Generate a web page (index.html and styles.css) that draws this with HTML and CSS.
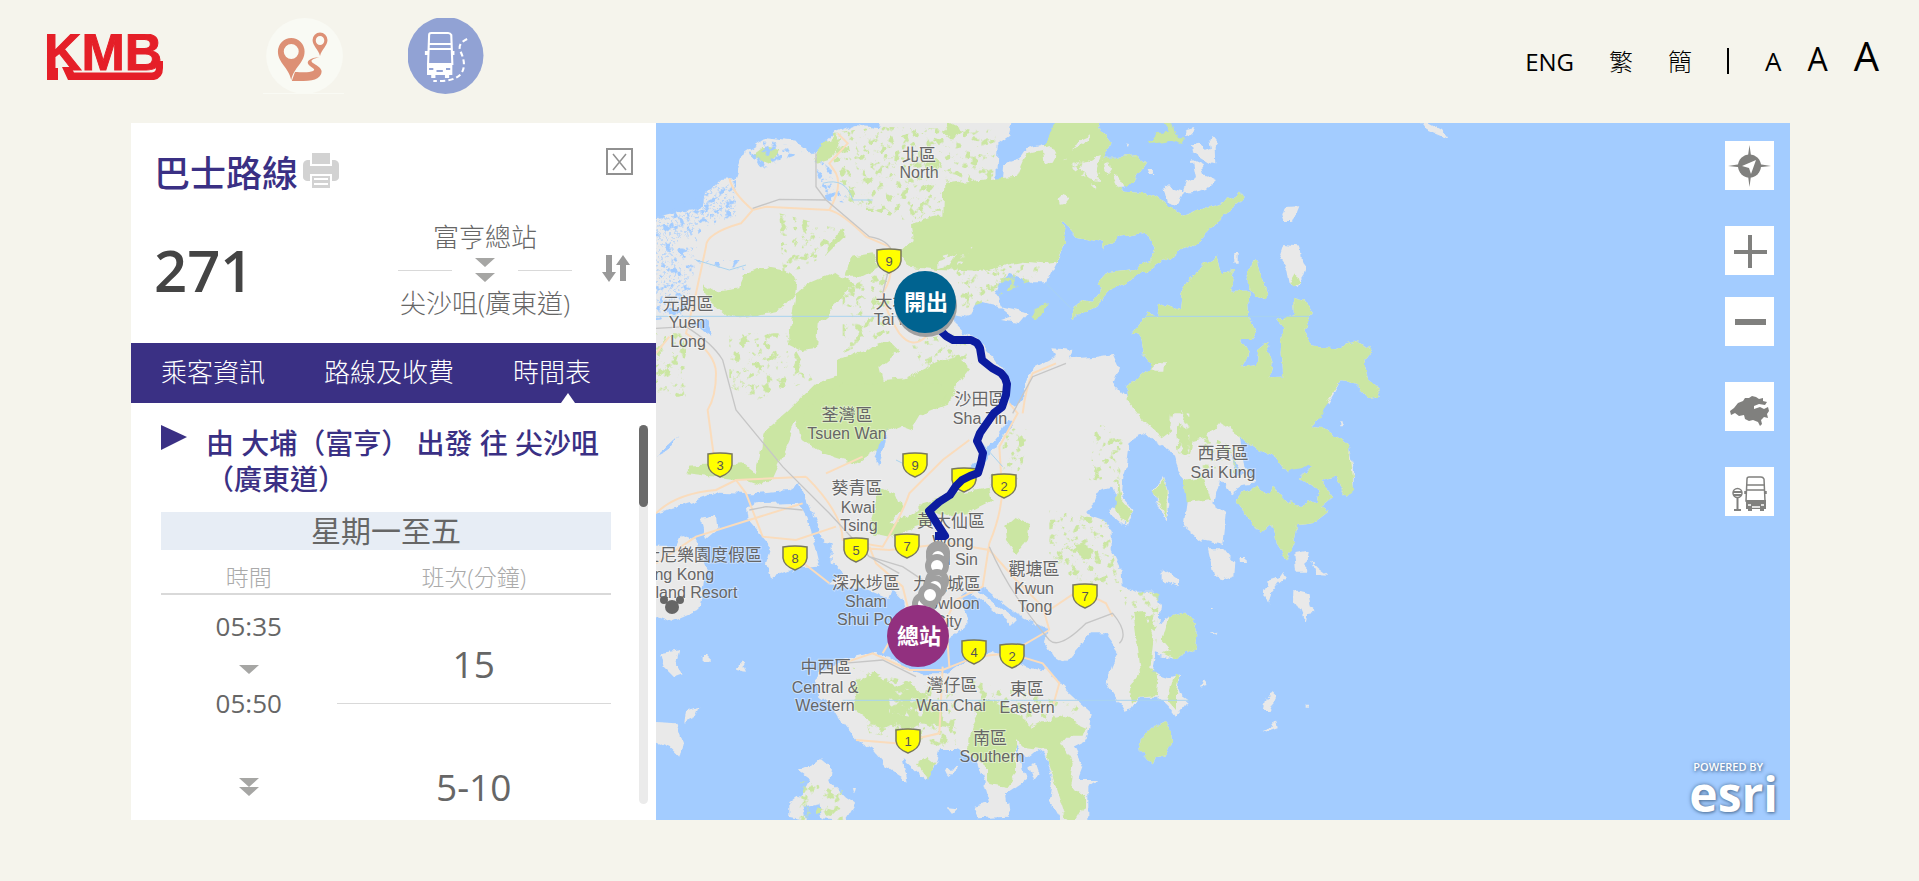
FILE: index.html
```html
<!DOCTYPE html>
<html lang="zh-Hant">
<head>
  <meta charset="UTF-8" />
  <title>KMB 巴士路線 271</title>
  <link rel="stylesheet" href="styles.css">
</head>
<body>
  <header class="header">
    <a class="logo" href="#" aria-label="KMB">
      <svg width="124" height="46" viewBox="0 0 124 46">
        <text class="logoText" x="0" y="36">KMB</text>
        <path d="M3 34H14V46H3ZM18 33L24 46H110Q119 44 119 34V27L112 27V34Q112 38 108 38.500H30L27 33Z" />
      </svg>
    </a>
    <nav class="modes">
      <a href="#" aria-label="點到點搜尋">
        <svg width="81" height="76" viewBox="0 0 76 76" preserveAspectRatio="none">
          <ellipse cx="39" cy="38" rx="36" ry="38" fill="#f9faf4" />
          <path d="M0 76H76" stroke="#f9faf4" stroke-width="2" />
          <g fill="#dd9075">
            <path fill-rule="evenodd" d="M26.500 62C24 49 14 45 14 33.500a12.500 13.500 0 0 1 25 0C39 45 29 49 26.500 62ZM26.500 26a7 7.500 0 1 0 0 15a7 7.500 0 0 0 0-15Z" />
            <path fill-rule="evenodd" d="M53.500 38C52 31 46.500 28 46.500 22a7 7.500 0 0 1 14 0C60.500 28 55 31 53.500 38ZM53.500 18a4 4.500 0 1 0 0 9a4 4.500 0 0 0 0-9Z" />
            <path d="M53 39C44 40 40 43 43 47C46 50 50 51 47 53C43 55 35 54 30 54L27 63H38C50 63 55 59 55 53C54 47 43 45 46 42C48 40 51 40 53 39Z" />
          </g>
        </svg>
      </a>
      <a href="#" aria-label="路線搜尋">
        <svg width="76" height="76" viewBox="0 0 72 76" preserveAspectRatio="none">
          <ellipse cx="35.500" cy="37.500" rx="36" ry="38.500" fill="#91a2d4" />
          <g fill="none" stroke="#fff" stroke-width="2">
            <path d="M20 17Q20 15 22 15H38Q40 15 41 17L42 46H19ZM19 26H41M19 31H41" />
            <path d="M56 21Q46 26 50 34Q56 48 50 56Q44 64 24 63" stroke-dasharray="5 3" />
          </g>
          <path fill="#fff" d="M18 45H42V57H39V60H35V57H26V60H22V57H18ZM16 33H19V37H16ZM41 33H44V37H41Z" />
          <path d="M20 51H24M36 51H40M27 53H33" stroke="#91a2d4" stroke-width="2" />
        </svg>
      </a>
    </nav>
    <nav class="options">
      <a class="eng" href="#">ENG</a>
      <a href="#">繁</a>
      <a href="#">簡</a>
      <span class="bar"></span>
      <button class="fontBtn small">A</button>
      <button class="fontBtn medium">A</button>
      <button class="fontBtn large">A</button>
    </nav>
  </header>

  <main class="main">
    <section class="panel">
      <div class="routeHead">
        <div class="titleRow">
          <h1>巴士路線</h1>
          <button class="iconBtn" aria-label="列印">
            <svg width="36" height="35" viewBox="0 0 36 35" fill="#d2d2d2">
              <path d="M9 0H27V11H9ZM4 7H7V13H29V7H32Q36 8 36 12V24Q36 27 32 28H29V21H7V28H4Q0 27 0 24V12Q0 8 4 7Z" />
              <path fill-rule="evenodd" d="M9 23H27V35H9ZM11 25V27H25V25ZM11 30V32H25V30Z" />
            </svg>
          </button>
          <button class="iconBtn close" aria-label="關閉">
            <svg width="27" height="27" viewBox="0 0 27 27" fill="none" stroke="#909090" stroke-width="2">
              <path d="M1 1H26V26H1Z" /><path d="M7 6L20 22M20 6L7 22" stroke-width="1.500" />
            </svg>
          </button>
        </div>
        <div class="routeRow">
          <strong class="routeNo">271</strong>
          <div class="stops">
            <span>富亨總站</span>
            <div class="divider">
              <i></i>
              <svg width="20" height="25" viewBox="0 0 20 25" fill="#a6a6a4"><path d="M0 0H20L10 9ZM0 15H20L10 24Z" /></svg>
              <i></i>
            </div>
            <span>尖沙咀(廣東道)</span>
          </div>
          <button class="iconBtn swap" aria-label="對調方向">
            <svg width="28" height="27" viewBox="0 0 28 27" fill="#999"><path d="M4 0H10V17H14L7 27L0 17H4ZM21 0L28 10H24V26H18V10H14Z" /></svg>
          </button>
        </div>
      </div>

      <nav class="tabs">
        <a href="#">乘客資訊</a>
        <a href="#">路線及收費</a>
        <a class="active" href="#">時間表</a>
      </nav>

      <div class="content">
        <div class="timetable">
          <div class="direction">
            <svg width="26" height="25" viewBox="0 0 26 25" fill="#3a3084"><path d="M0 0L26 12L0 25Z" /></svg>
            <h2>由 大埔（富亨） 出發 往 尖沙咀（廣東道）</h2>
          </div>
          <h3>星期一至五</h3>
          <table>
            <thead>
              <tr><th class="timeCol">時間</th><th>班次(分鐘)</th></tr>
            </thead>
            <tbody>
              <tr class="rowTime"><td>05:35</td><td class="freq line" rowspan="3">15</td></tr>
              <tr class="rowArrow"><td><svg width="20" height="9" viewBox="0 0 20 9" fill="#a6a6a4"><path d="M0 0H20L10 9Z" /></svg></td></tr>
              <tr class="rowHalf"><td rowspan="2">05:50</td></tr>
              <tr class="rowHalf"><td class="freq long" rowspan="2">5-10</td></tr>
              <tr class="rowLong"><td><svg width="20" height="18" viewBox="0 0 20 18" fill="#a6a6a4"><path d="M0 0H20L10 9ZM0 9H20L10 18Z" /></svg></td></tr>
            </tbody>
          </table>
        </div>
        <div class="track"><div class="thumb"></div></div>
      </div>
    </section>

    <section class="map">
      <svg class="mapSvg" viewBox="0 0 1134 697" preserveAspectRatio="xMinYMin slice">
        <defs>
          <!-- ragged coastline -->
          <filter id="rough" x="0" y="0" width="1" height="1">
            <feTurbulence type="fractalNoise" baseFrequency="0.09" numOctaves="3" seed="4" />
            <feDisplacementMap in="SourceGraphic" scale="8" xChannelSelector="R" yChannelSelector="G" />
          </filter>
          <!-- scattered patches -->
          <filter id="specks" x="0" y="0" width="1" height="1">
            <feTurbulence type="fractalNoise" baseFrequency="0.13" numOctaves="4" seed="9" />
            <feColorMatrix values="0 0 0 0 0  0 0 0 0 0  0 0 0 0 0  9 0 0 0 -5" />
            <feComposite in="SourceGraphic" operator="in" />
          </filter>
          <path id="shield" d="M-12 -11Q0 -13 12 -11L12 0Q11 8 0 12Q-11 8 -12 0Z" />
        </defs>
        <rect width="1134" height="697" fill="#a3ccff" />

        <g filter="url(#rough)">
          <g transform="translate(0 -3) scale(.33333)">
            <g class="land">
              <path d="M-20 300L90 270 140 265 150 220 190 180 235 178 262 100 330 55 420 65 465 100 480 95 540 35 600 12 670 22 675-20 1075-20 1060 50 1025 75 1020 195 1040 190 1045 130 1090 115 1110 85 1150 75 1195 75 1212-20 1317-20 1337 30 1367 70 1342 110 1402 110 1442 105 1472 130 1427 195 1382 195 1407 215 1472 220 1522 245 1582 290 1652 260 1707 245 1752 215 1772 230 1702 285 1632 360 1607 378 1522 420 1442 470 1362 510 1317 560 1249 595 1249 565 1282 540 1307 545 1340 505 1322 495 1352 460 1432 450 1482 420 1497 385 1467 338 1392 350 1342 385 1342 368 1262 350 1227 310 1217 300 1227 370 1202 430 1172 490 1130 490 1060 458 1030 490 1020 520 1040 570 1065 590 1035 600 1090 610 1115 580 1000 555 965 545 940 590 895 583 900 620 920 640 960 650 1000 700 1060 770 1060 850 1080 865 1100 840 1115 780 1135 740 1200 705 1192 685 1252 690 1242 715 1322 710 1372 702 1389 740 1370 790 1412 835 1412 800 1482 750 1482 730 1460 700 1452 650 1427 640 1477 575 1507 600 1512 545 1572 570 1577 520 1602 470 1652 430 1682 410 1697 460 1737 450 1722 515 1777 515 1782 590 1802 630 1787 660 1757 660 1777 700 1760 740 1802 735 1807 690 1832 670 1847 730 1837 772 1882 770 1877 700 1882 620 1864 600 1917 585 1914 535 1952 545 1967 575 1949 625 1967 680 2037 685 2097 665 2152 688 2122 730 2132 770 2162 795 2174 830 2137 838 2102 795 2057 780 2017 850 1997 850 1992 895 1967 920 2002 925 2082 980 2094 1050 2092 1110 2072 1130 2037 1070 1997 1080 2032 1130 1997 1160 2017 1175 1972 1210 1927 1215 1917 1265 1892 1318 1862 1270 1852 1210 1812 1245 1782 1205 1742 1145 1752 1115 1802 1100 1842 1125 1852 1100 1892 1145 1932 1155 1982 1140 1992 1110 1932 1075 1972 1035 1932 1040 1892 1055 1862 1015 1802 985 1752 950 1765 1040 1800 1090 1760 1095 1722 1120 1692 1080 1672 1150 1712 1180 1702 1275 1632 1260 1582 1220 1592 1150 1582 1080 1562 1035 1552 1000 1492 960 1472 940 1422 960 1412 1040 1402 1070 1397 1130 1432 1170 1412 1220 1357 1175 1390 1150 1367 1100 1332 1110 1317 1150 1287 1180 1342 1200 1367 1230 1367 1290 1392 1340 1397 1395 1442 1415 1497 1415 1512 1460 1507 1510 1537 1490 1582 1475 1622 1520 1617 1585 1562 1620 1497 1600 1487 1660 1537 1675 1572 1665 1567 1720 1597 1740 1557 1788 1537 1760 1502 1730 1452 1730 1427 1770 1407 1775 1352 1690 1367 1640 1387 1595 1347 1540 1302 1540 1227 1630 1192 1610 1167 1570 1175 1530 1080 1480 980 1400 960 1405 1080 1500 1065 1515 940 1410 915 1430 935 1510 900 1540 860 1560 780 1560 755 1500 740 1440 710 1410 700 1435 640 1410 515 1395 560 1360 530 1330 530 1270 500 1265 465 1170 430 1090 400 1110 290 1120 190 1115 100 1150 -20 1185Z" />
              <!-- Tsing Yi, Lantau, Ma Wan -->
              <path d="M270 1170L300 1150 430 1145 455 1190 490 1340 430 1345 345 1375 330 1330 345 1280 275 1200ZM-20 1280L60 1280 75 1245 115 1260 130 1290 150 1340 130 1470 50 1505-20 1480ZM135 1200L180 1190 185 1230 150 1260Z" />
              <!-- Hong Kong Island -->
              <path d="M490 1660L560 1620 640 1600 700 1610 740 1640 800 1660 870 1660 930 1620 1010 1595 1060 1620 1110 1640 1150 1650 1172 1640 1202 1680 1242 1720 1307 1780 1292 1860 1252 1880 1282 1940 1267 1980 1327 1980 1297 2000 1297 2120 1227 2120 1182 2040 1192 1980 1172 1910 1145 1890 1110 1920 1075 1870 1110 1980 1050 2020 1060 2090 965 2095 950 2060 1000 2050 980 1980 960 1920 930 1900 900 1890 850 1890 840 1930 810 1980 775 1950 740 1920 755 1985 700 1950 650 1890 600 1860 560 1810 530 1760 490 1730 480 1680Z" />
              <!-- Lamma and the western islands -->
              <path d="M495 1915L525 1940 520 1980 570 2030 600 2050 570 2100 500 2095 490 2050 440 2060 450 2100 400 2090 400 2050 440 2020 460 1980 425 1955 470 1935ZM10 1600L70 1590 60 1630 80 1660 50 1670 20 1640ZM255 1620L270 1655 240 1650ZM90 1770L130 1760 120 1790 85 1805ZM-10 1805L60 1810 80 1870 70 1910 40 1880-10 1860ZM140 1608h18v12h-18ZM590 2005l10-2-5 20ZM875 2065l28 3-15 14ZM870 1945l40-5-30 25ZM1120 1940l20-10 10 30-15 20Z" />
              <!-- eastern islands -->
              <path d="M1588 30l24-6-8 22-16 2ZM1605 70l25-5 20 30 15-5-5-30 10-12 16 20-10 20 2 45-20-5-50-30ZM1610 120l30 15 10 30 30 12-30 30-40 10-30 0 10-30 30-15ZM1525 200l60 15-20 40-30-10ZM1887 258l40-2-20 50-20 0-8-22ZM1885 375l45 5 5 40 15 20-10 30-20 30-22-10-8-40-20-28ZM1775 470l24-50 18 50 20 50-10 14-50-22ZM1735 405h10v20h-10ZM2285-10l70 40 20 25-60-25ZM1475 150l15 0 5 12-15 0ZM1410 67l12 2-4 12ZM1475 315l20-8-3 30-12 20Z" />
              <path d="M1490 1110L1524 1065 1534 1110 1540 1150 1532 1205 1500 1140ZM1655 1285L1700 1285 1738 1330 1735 1365 1700 1378 1675 1370ZM1520 1345L1570 1380 1568 1402 1520 1380ZM1750 1308l15 0 2 15-15 0ZM1915 1300l40-8-5 60-30 0ZM1965 1325l20 20 30 22-35-2ZM1835 1385l35-10 15-22 8 15-22 20-25 30-10 30-12-30ZM1915 1410l40 10 6 45 15 10-25 5-5 20-12-30-20-30ZM1640 1680l12 15-20 5ZM1850 1720l8 8-20 45-14 0 10-45ZM1860 1795l5 30-30 10-15-5 30-10ZM1455 1855L1490 1820 1530 1800 1545 1830 1548 1870 1532 1905 1500 1912 1490 1930 1450 1890ZM2050 910h10v12h-10ZM1660 1538l22-6 4 8ZM1665 1465h8v5h-8ZM1955 1757h10v6h-10Z" />
            </g>

            <g class="park">
              <path d="M865 190L1080 170 1110 100 1160 90 1212-20 1317-20 1337 30 1367 70 1342 110 1402 110 1442 105 1472 130 1427 195 1382 195 1407 215 1472 220 1522 245 1582 290 1652 260 1707 245 1752 215 1772 230 1702 285 1632 360 1607 378 1522 420 1442 470 1362 510 1317 560 1249 595 1249 565 1282 540 1307 545 1340 505 1322 495 1352 460 1432 450 1482 420 1497 385 1467 338 1392 350 1342 385 1342 368 1262 350 1227 310 1217 300 1227 370 1202 425 1160 430 1100 425 960 455 850 450 760 440 730 400 770 360 765 310 830 290 862 290Z" />
              <path d="M1412 840L1412 800 1482 750 1482 730 1460 700 1452 650 1427 640 1477 575 1507 600 1512 545 1572 570 1577 520 1602 470 1652 430 1682 410 1697 460 1737 450 1722 515 1777 515 1782 590 1802 630 1787 660 1757 660 1777 700 1760 740 1802 735 1807 690 1832 670 1847 730 1837 772 1882 770 1877 700 1882 620 1864 600 1917 585 1914 535 1952 545 1967 575 1949 625 1967 680 2037 685 2097 665 2152 688 2122 730 2132 770 2162 795 2174 830 2137 838 2102 795 2057 780 2017 840 1992 895 1967 920 2002 925 2082 980 2094 1110 2072 1130 2037 1070 1997 1080 2032 1130 1997 1160 2017 1175 1972 1210 1927 1215 1917 1265 1892 1318 1862 1270 1852 1210 1812 1245 1782 1205 1742 1145 1752 1115 1802 1100 1842 1125 1852 1100 1892 1145 1932 1155 1982 1140 1992 1110 1932 1075 1972 1035 1892 1055 1862 1015 1802 985 1752 950 1690 905 1650 950 1610 960 1600 1010 1570 1000 1560 940 1575 880 1555 880 1540 940 1520 955 1460 900Z" />
              <path d="M140 490L180 515 250 505 260 460 320 443 390 455 425 480 420 520 375 570 300 585 250 592 210 585 160 540ZM400 640L420 520 460 490 540 455 590 490 520 580 485 610 480 690 440 695 400 675ZM572 470L585 410 650 400 670 440 610 470Z" />
              <path d="M300 1060L320 940 390 880 480 790 540 770 540 720 600 700 700 660 730 690 670 740 680 780 750 775 840 730 900 715 945 745 900 800 880 850 800 880 770 930 690 900 680 980 600 1030 500 1000 440 960 420 900 400 960 350 1070 320 1100 260 1080 90 1060 100 1040 260 1030Z" />
              <path d="M540 800L700 780 850 790 870 830 780 900 700 930 640 990 560 1000 430 940 450 860ZM470 120l25-50 60-10-25 50-50 15ZM280 110l40-30 50 10-20 40ZM515 370l50-40 0 20-50 50ZM860 40l20-30 40 20-30 20ZM630 260l30 0-5 10-25 0ZM1475 70l25-30 45-5-25-35 25 10 25 45 20 0-5 20-45-15ZM1125 590l20-35 28-8-12 30-22 20Z" />
              <path d="M640 1200L670 1100 720 1120 740 1170 700 1210 760 1190 800 1150 900 1120 1000 1100 1010 1140 930 1180 880 1190 840 1180 800 1220 700 1250 650 1240ZM1045 1220L1080 1190 1120 1210 1110 1260 1080 1300 1050 1260ZM1257 1275l30-5 25 20-5 30-30-5ZM1432 1480L1465 1475 1490 1560 1480 1640 1507 1680 1502 1725 1450 1730 1428 1755 1422 1700 1455 1660 1445 1580ZM1537 1490L1582 1475 1622 1520 1617 1585 1562 1620 1520 1600 1545 1590 1520 1560Z" />
              <path d="M590 1700L650 1660 720 1700 760 1680 850 1770 860 1800 900 1820 790 1810 760 1830 720 1810 680 1830 640 1800 600 1770ZM980 1730L1050 1760 1130 1820 1170 1800 1220 1790 1290 1820 1280 1850 1230 1850 1215 1870 1250 1930 1240 2000 1290 2030 1290 2060 1240 2090 1225 2070 1195 1980 1170 1890 1100 1880 1080 1860 1080 1960 1050 2000 990 1990 990 1940 940 1900 940 1850 960 1800ZM780 1930L810 1910 835 1930 820 1980ZM1220 2090L1250 2020 1290 2040 1250 2110ZM1455 1855L1490 1820 1530 1800 1545 1830 1548 1870 1532 1905 1500 1912 1490 1930 1450 1890ZM1490 1115L1524 1070 1532 1110 1532 1195ZM1590 1150L1582 1080 1640 1070 1665 1140 1630 1145ZM1385 1075l0 0 8 60 35 40-20 40-30-50ZM1535 1740l20-75 15 5-10 60 0 40ZM1775 470l24-50 18 50 20 50-10 14-50-22ZM1900 490l20-35 10 30-20 14Z" />
            </g>
            <!-- villages inside the parks -->
            <path class="land" d="M1248 95L1270 60 1305 45 1285 70ZM1270 150L1320 110 1335 105 1320 150 1330 180 1300 175ZM1345 150l15-30 5 30-10 15ZM1370 170l20 0 10 30-15 0ZM1208 240l15-12 18 6-15 18-15 2ZM1160 80L1190 75 1204 100 1190 125 1165 130ZM1480 750L1500 730 1527 730 1525 755 1495 755ZM1565 900l15-30 5 10-12 50ZM850 420l50-15-20 30-30 10Z" />

            <g class="water">
              <path d="M655 1030L670 970 695 930 685 980 670 1040ZM940 1050L1060 900 1075 905 960 1055ZM0 1010L70 945 40 990ZM150 600l20 50-60-40ZM1770 990l30 10 20 40-30-20ZM1720 1000l0 0 40 60-15 5Z" />
            </g>
          </g>
        </g>

        <!-- loose woods, fish ponds and clearings -->
        <g filter="url(#specks)">
          <g transform="translate(0 -3) scale(.33333)">
            <path fill="#cbe6a3" d="M520 40L670 20 1020 30 1010 190 870 200 850 290 740 300 560 240 530 130ZM370 280L560 330 500 430 380 460ZM220 640L390 640 470 780 300 840 220 800ZM560 480L700 460 700 640 560 700ZM0 640L90 640 90 830 0 830ZM900 450L1160 430 1130 480 1000 540 920 570ZM760 660L920 640 950 740 800 740ZM1040 910L1120 930 1090 1080 1040 1060ZM1320 900L1400 960 1400 1090 1300 1080ZM1180 1170L1350 1200 1390 1390 1300 1400 1180 1330ZM1390 1410L1510 1420 1500 1580 1450 1560ZM580 1640L900 1720 900 1890 640 1840ZM940 1680L1280 1760 1160 1850 960 1820ZM430 1980L560 2010 560 2100 430 2100ZM1010 1060L1060 1110 900 1180ZM1640 940L1750 990 1740 1060 1640 1050Z" />
            <path fill="#e9e9e9" d="M1150 70L1240 120 1340 120 1320 210 1280 170ZM1540 880L1600 880 1600 1010 1540 1000ZM850 410L950 380 900 460ZM700 1690L850 1740 820 1800 700 1780Z" />
            <path fill="#a3ccff" d="M0 290L240 180 240 290 130 340 120 420 90 590 0 600ZM270 90L330 60 460 90 380 120 320 150ZM470 100L500 240 580 250 540 160ZM120 420L270 420 270 450 140 440Z" />
          </g>
        </g>
        <g transform="translate(0 -3) scale(.33333)" fill="none">
          <path fill="#a3ccff" opacity=".6" d="M0 300L90 270 150 200 235 190 240 290 150 300 80 350 50 380 100 480 90 560 0 560Z" filter="url(#specks)" />
          <g class="road">
            <path d="M220 175Q230 220 290 270L330 260 520 270Q560 280 630 350L700 380Q720 460 680 520Q690 580 730 640Q770 690 810 650M290 270L255 310Q150 340 150 380L120 520 90 640Q180 700 180 760Q180 830 155 870L175 1020M520 270Q560 200 540 160L520 130 575 70 545 40M0 700L40 650" />
            <path d="M0 1180Q60 1120 180 1110L240 1080 450 1070M240 1080L270 1120 320 1250 420 1260 540 1220M0 1330L120 1250 440 1150M380 1280L520 1390M450 1070Q560 1180 560 1260L680 1280Q740 1180 760 1120L860 1020 940 960M640 1280L660 1330 740 1400 760 1480M560 1280L700 1290 880 1270 1000 1290 1080 1380 1160 1460 1180 1530M1035 1060Q1050 1150 1000 1270L980 1400 900 1440 870 1500 880 1640M1060 850L1085 880 1030 980 1035 1060M1100 880Q1110 800 1130 760L1200 730M560 1630L650 1600 760 1650 860 1650 960 1610 1060 1600 1160 1630 1210 1690 1190 1760M600 1860L720 1870 850 1840 860 1640M1060 1600L1180 1530M1180 1470L1270 1410 1350 1450 1370 1490M680 1600L740 1500M510 1060L620 1010" />
          </g>
          <g class="rail">
            <path d="M290 265L370 238 510 240 640 350Q700 360 710 400L680 520M480 100L480 200 510 240M0 625L90 620Q170 670 200 720L240 870 380 1040 520 1180 640 1310 730 1360M1070 880L1130 770 1230 730M280 1170L330 1160 440 1170M640 1310L740 1340 830 1400M1000 1280Q1060 1420 1180 1560Q1210 1590 1290 1510L1370 1480Q1420 1540 1390 1570M560 1630L680 1620 780 1670" />
          </g>
          <g class="stream">
            <path d="M500 190Q570 170 590 240L650 240M720 1020L780 1050M120 420L220 450 270 435M1170 490L1250 570M960 950L1040 1040M0 589H900M1460 589H1960M560 1741H1600" />
          </g>
        </g>

        <g class="labels zh">
          <text x="263" y="38">北區</text>
          <text x="32" y="187">元朗區</text>
          <text x="245" y="185">大埔區</text>
          <text x="191" y="298">荃灣區</text>
          <text x="324" y="282">沙田區</text>
          <text x="567" y="336">西貢區</text>
          <text x="201" y="371">葵青區</text>
          <text x="295" y="404">黃大仙區</text>
          <text x="38" y="438">迪士尼樂園度假區</text>
          <text x="210" y="466">深水埗區</text>
          <text x="291" y="467">九龍城區</text>
          <text x="378" y="452">觀塘區</text>
          <text x="170" y="550">中西區</text>
          <text x="296" y="568">灣仔區</text>
          <text x="371" y="572">東區</text>
          <text x="334" y="621">南區</text>
        </g>
        <g class="labels">
          <text x="263" y="55">North</text>
          <text x="31" y="205">Yuen</text><text x="32" y="224">Long</text>
          <text x="240" y="202">Tai Po</text>
          <text x="191" y="316">Tsuen Wan</text>
          <text x="324" y="301">Sha Tin</text>
          <text x="567" y="355">Sai Kung</text>
          <text x="202" y="390">Kwai</text><text x="203" y="408">Tsing</text>
          <text x="297" y="424">Wong</text><text x="298" y="442">Tai Sin</text>
          <text x="18" y="457">Hong Kong</text><text x="16" y="475">Disneyland Resort</text>
          <text x="210" y="484">Sham</text><text x="209" y="502">Shui Po</text>
          <text x="293" y="486">Kowloon</text><text x="292" y="504">City</text>
          <text x="378" y="471">Kwun</text><text x="379" y="489">Tong</text>
          <text x="169" y="570">Central &amp;</text><text x="169" y="588">Western</text>
          <text x="295" y="588">Wan Chai</text>
          <text x="371" y="590">Eastern</text>
          <text x="336" y="639">Southern</text>
        </g>
        <g fill="#666"><circle cx="16" cy="484" r="7" /><circle cx="8" cy="477" r="4" /><circle cx="24" cy="477" r="4" /></g>

        <g class="shields">
          <g transform="translate(233 138)"><use href="#shield" /><text y="5">9</text></g>
          <g transform="translate(64 342)"><use href="#shield" /><text y="5">3</text></g>
          <g transform="translate(259 342)"><use href="#shield" /><text y="5">9</text></g>
          <g transform="translate(308 357)"><use href="#shield" /></g>
          <g transform="translate(348 363)"><use href="#shield" /><text y="5">2</text></g>
          <g transform="translate(200 427)"><use href="#shield" /><text y="5">5</text></g>
          <g transform="translate(251 423)"><use href="#shield" /><text y="5">7</text></g>
          <g transform="translate(139 435)"><use href="#shield" /><text y="5">8</text></g>
          <g transform="translate(429 473)"><use href="#shield" /><text y="5">7</text></g>
          <g transform="translate(318 529)"><use href="#shield" /><text y="5">4</text></g>
          <g transform="translate(356 533)"><use href="#shield" /><text y="5">2</text></g>
          <g transform="translate(252 618)"><use href="#shield" /><text y="5">1</text></g>
        </g>

        <!-- route and stops -->
        <path class="route" d="M284 207L290 213 297 217H315L321 220 324 225 326 237 336 245 345 250 349 255 351 261 350 272 346 284 338 290 331 300 324 310 321 318 327 330 325 340 322 350 314 353 306 357 300 363 294 372 283 379 273 388 280 399 289 413H279" />
        <g class="stopRings">
          <circle cx="282" cy="430" r="9" /><circle cx="282" cy="434" r="9" /><circle cx="281" cy="443" r="9" />
          <circle cx="281" cy="458" r="9" /><circle cx="279" cy="464" r="9" /><circle cx="268" cy="481" r="9" /><circle cx="274" cy="472" r="9" />
        </g>
        <circle cx="270" cy="183" r="31" fill="#a0a0a0" />
        <g class="ends">
          <circle cx="269" cy="179" r="31" fill="#006390" /><text x="270" y="187">開出</text>
          <circle cx="262" cy="513" r="31" fill="#92307f" /><text x="263" y="521">總站</text>
        </g>
      </svg>

      <div class="mapTools">
        <button aria-label="我的位置">
          <svg width="49" height="49" viewBox="0 0 49 49" fill="#80807e">
            <path d="M24.500 4L27 22 46 25 27 27 24.500 46 22 27 3 25 22 22Z" /><circle cx="24.500" cy="25" r="11.500" />
            <path fill="#fff" d="M31 19L26 33 24 27 17 25Z" />
          </svg>
        </button>
        <div class="zoomBtns">
          <button aria-label="放大"><svg width="49" height="49" viewBox="0 0 49 49" stroke="#80807e" stroke-width="4"><path d="M9 26H42M25 9V42" /></svg></button>
          <button aria-label="縮小"><svg width="49" height="49" viewBox="0 0 49 49" stroke="#80807e" stroke-width="6"><path d="M10 25H41" /></svg></button>
        </div>
        <button aria-label="全港">
          <svg width="49" height="49" viewBox="0 0 49 49" fill="#80807e">
            <path d="M5 29L9 26 13 21 18 19 20 16 24 16 27 14 31 15 34 17 38 16 38 19 42 20 40 23 34 22 29 24 29 27 35 25 39 27 43 25 44 29 42 32 43 36 39 35 36 38 37 42 35 44 33 40 28 38 24 39 20 37 19 33 14 34 10 31 6 33Z" />
          </svg>
        </button>
        <button aria-label="巴士站">
          <svg width="49" height="49" viewBox="0 0 49 49" fill="none" stroke="#80807e" stroke-width="1.500">
            <path d="M22 12Q22 10 24 10H36Q38 10 39 12L40 34H21ZM22 18H39M22 23H39M20 24V27M41 24V27" />
            <circle cx="12.500" cy="26" r="4.500" /><path d="M8 25H17M8 28H17M12.500 31V42M9 43H16" stroke-width="2" />
            <path fill="#80807e" stroke="none" d="M21 33H41V42H39V44H35V42H27V44H23V42H21Z" />
            <path stroke="#fff" d="M23 38H26M36 38H39M27 40H35" />
          </svg>
        </button>
      </div>

      <a class="esri" href="#"><span>POWERED BY</span><b>esri</b></a>
    </section>
  </main>
</body>
</html>
```
FILE: styles.css
```css
* {
  box-sizing: border-box;
}
body {
  margin: 0;
  background-color: #f5f4ec;
  font-family: "Open Sans", "Noto Sans CJK TC", sans-serif;
  color: #666;
}
a {
  color: inherit;
  text-decoration: none;
}
button {
  padding: 0;
  border: 0;
  background: none;
  font-family: inherit;
  cursor: pointer;
}
svg {
  display: block;
  flex: none;
}
h1, h2, h3 {
  margin: 0;
}

/* header */
.header {
  display: flex;
  align-items: flex-start;
  height: 123px;
  padding: 18px 40px 0 44px;
}
.logo {
  margin-top: 16px;
  fill: #e51f28;
}
.logoText {
  font: bold 52px "Liberation Sans", Arial, sans-serif;
  stroke: #e51f28;
  stroke-width: 1px;
}
.modes {
  display: flex;
  gap: 64px;
  margin-left: 95px;
}
.options {
  display: flex;
  align-items: baseline;
  margin: 10px 0 0 auto;
  color: #000;
  font-size: 24px;
  font-weight: 300;
}
.options .eng {
  font-weight: 400;
}
.options a {
  margin-right: 35px;
}
.bar {
  align-self: center;
  width: 2px;
  height: 26px;
  margin-top: 11px;
  background: #000;
}
.fontBtn {
  margin-left: 26px;
  color: #000;
}
.small {
  margin-left: 36px;
  font-size: 26px;
}
.medium {
  font-size: 32px;
}
.large {
  font-size: 40px;
}

/* panel */
.main {
  display: flex;
  height: calc(100vh - 184px);
  min-height: 600px;
  margin: 0 129px 0 131px;
}
.panel {
  display: flex;
  flex-direction: column;
  flex: 0 0 525px;
  background: #fff;
}
.routeHead {
  height: 220px;
  padding: 25px 23px 0 23px;
}
.titleRow {
  display: flex;
  align-items: flex-start;
}
h1 {
  margin-right: 5px;
  color: #3a3084;
  font-size: 36px;
  font-weight: 500;
  line-height: 52px;
}
.titleRow .iconBtn {
  margin-top: 5px;
}
.titleRow .close {
  margin: 0 0 0 auto;
}
.routeRow {
  display: flex;
  align-items: center;
  margin-top: 20px;
}
.routeNo {
  color: #444;
  font-size: 58px;
  font-weight: 600;
  line-height: 60px;
}
.stops {
  width: 174px;
  margin-left: auto;
  color: #666;
  font-size: 26px;
  font-weight: 300;
  line-height: 34px;
  text-align: center;
  white-space: nowrap;
}
.divider {
  display: flex;
  align-items: center;
  justify-content: space-between;
  height: 32px;
}
.divider i {
  width: 54px;
  height: 1px;
  background: #d9d9d9;
}
.swap {
  margin: 0 3px 4px 30px;
}
.tabs {
  display: flex;
  flex: 0 0 60px;
  gap: 59px;
  padding-left: 30px;
  background: #3a3084;
  color: #fff;
  font-size: 26px;
  font-weight: 300;
  line-height: 58px;
}
.tabs .active {
  position: relative;
}
.active::after {
  content: "";
  position: absolute;
  right: 16px;
  bottom: 0;
  border: 7px solid transparent;
  border-top-width: 0;
  border-bottom: 10px solid #fff;
}

/* timetable */
.content {
  display: flex;
  flex: 1;
  min-height: 0;
  padding: 22px 8px 0 30px;
}
.timetable {
  flex: 1;
  margin-right: 28px;
  overflow: hidden;
}
.direction {
  display: flex;
  align-items: flex-start;
}
h2 {
  margin-left: 19px;
  color: #3a3084;
  font-size: 28px;
  font-weight: 500;
  line-height: 36px;
}
h3 {
  margin-top: 15px;
  background: #e7edf5;
  color: #666;
  font-size: 30px;
  font-weight: 400;
  line-height: 38px;
  text-align: center;
}
table {
  width: 100%;
  border-collapse: collapse;
  table-layout: fixed;
  text-align: center;
}
th {
  height: 44px;
  padding: 11px 0 0;
  border-bottom: 2px solid #d9d9d9;
  color: #aaa;
  font-size: 23px;
  font-weight: 300;
  line-height: 30px;
}
td {
  padding: 0;
  font-size: 26px;
  line-height: 40px;
}
td svg {
  margin: 0 auto;
}
.timeCol {
  width: 39%;
}
.freq {
  padding-top: 30px;
  font-size: 37px;
}
.long {
  padding-top: 20px;
}
.line {
  border-bottom: 1px solid #d9d9d9;
}
.rowTime {
  height: 62px;
}
.rowArrow {
  height: 26px;
}
.rowHalf {
  height: 21px;
}
.rowLong {
  height: 126px;
}
.track {
  width: 9px;
  margin-bottom: 16px;
  border-radius: 5px;
  background: #ebebeb;
}
.thumb {
  height: 82px;
  border-radius: 5px;
  background: #6a6a6a;
}

/* map */
.map {
  position: relative;
  flex: 1;
  overflow: hidden;
  background: #a3ccff;
}
.mapSvg {
  width: 100%;
  height: 100%;
}
.land {
  fill: #e9e9e9;
}
.park {
  fill: #cbe6a3;
}
.water {
  fill: #a3ccff;
}
.road {
  stroke: #fadcbc;
  stroke-width: 6;
}
.rail {
  stroke: #c6c6c6;
  stroke-width: 4;
}
.stream {
  stroke: #a9d3ef;
  stroke-width: 3;
}
.labels {
  fill: #666;
  stroke: rgba(255, 255, 255, 0.4);
  stroke-width: 2px;
  paint-order: stroke;
  font-family: "Liberation Sans", "Noto Sans CJK TC", sans-serif;
  font-size: 16px;
  text-anchor: middle;
}
.zh {
  font-size: 17px;
}
.shields {
  fill: #ff0;
  stroke: #77775c;
  stroke-width: 1.5px;
}
.shields text {
  fill: #555;
  stroke: none;
  font: 13px "Liberation Sans", Arial, sans-serif;
  text-anchor: middle;
}
.route {
  fill: none;
  stroke: #0c1c9f;
  stroke-width: 8px;
  stroke-linejoin: round;
}
.stopRings {
  fill: #fff;
  stroke: #a0a0a0;
  stroke-width: 6px;
}
.ends text {
  fill: #fff;
  font: bold 22px "Noto Sans CJK TC", sans-serif;
  text-anchor: middle;
}
.mapTools {
  position: absolute;
  top: 18px;
  right: 16px;
  display: flex;
  flex-direction: column;
  gap: 36px;
}
.mapTools button {
  background: #fff;
}
.zoomBtns {
  display: flex;
  flex-direction: column;
  gap: 22px;
}
.esri {
  position: absolute;
  right: 12px;
  bottom: 4px;
  color: #fff;
  font-family: "Open Sans", sans-serif;
  text-shadow: 0 0 4px #5a7ca5, 1px 1px 3px #5a7ca5;
}
.esri span {
  display: block;
  margin-left: 4px;
  font-size: 11px;
  font-weight: 600;
  line-height: 10px;
}
.esri b {
  display: block;
  font-size: 48px;
  line-height: 44px;
}
```
